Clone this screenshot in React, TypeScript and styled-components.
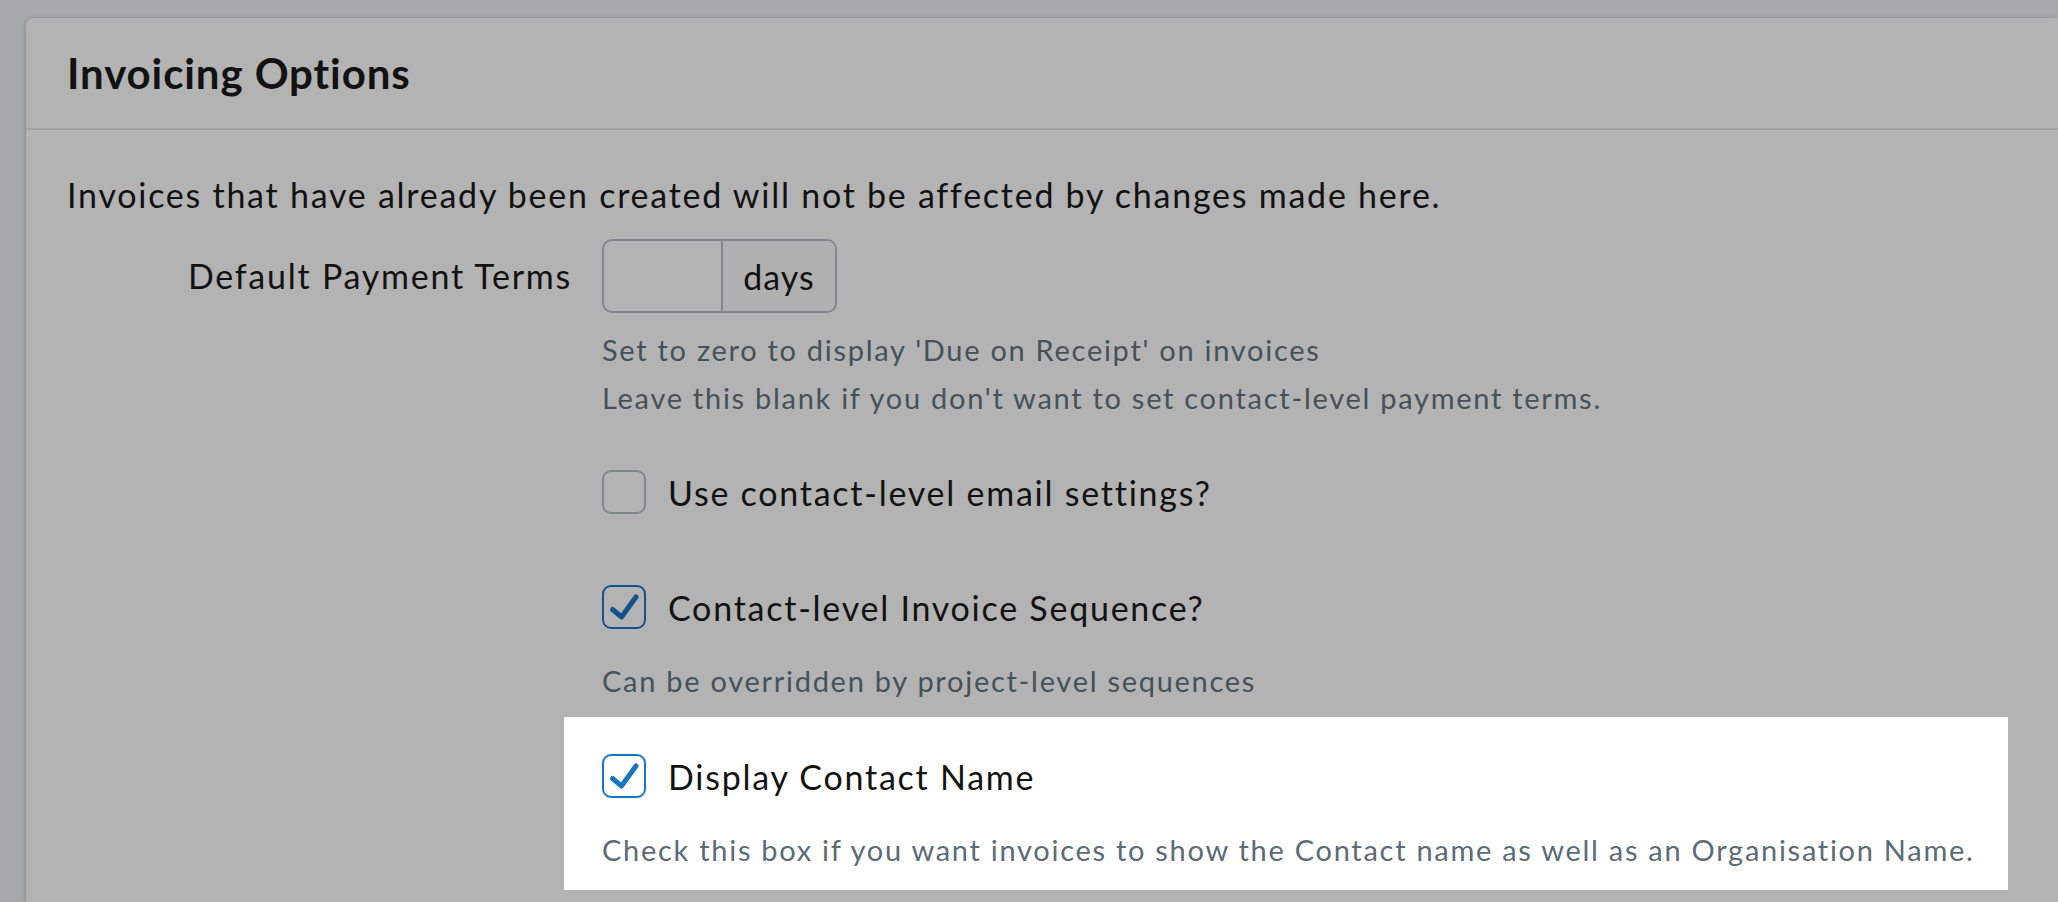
import React from "react";
import styled, { createGlobalStyle } from "styled-components";

const Global = createGlobalStyle`
  html, body { margin: 0; padding: 0; background: #a7aaad; }
  body { font-family: Lato, "Noto Sans", sans-serif; color: #121212; overflow: hidden; }
  * { box-sizing: border-box; }
`;

const Page = styled.div`
  padding: 18px 0 0 26px;
  height: 902px;
`;

const Card = styled.section`
  background: #b3b3b3;
  border-radius: 7px 0 0 0;
  box-shadow: -1px 0 4px rgba(0, 0, 0, 0.18);
  min-height: 900px;
`;

const Header = styled.header`
  height: 112px;
  display: flex;
  align-items: center;
  padding-left: 41px;
  border-bottom: 2px solid #a3a3a6;
`;

const Title = styled.h2`
  margin: 0;
  font-size: 42px;
  font-weight: 700;
  letter-spacing: 0.9px;
`;

const Body = styled.div`
  padding: 41px 0 0 41px;
  letter-spacing: 1.75px;
`;

const Intro = styled.p`
  margin: 0;
  font-size: 34px;
  line-height: 48px;
`;

const FormGrid = styled.div`
  display: grid;
  grid-template-columns: 505px 1fr;
  column-gap: 30px;
  margin-top: 20px;
`;

const Label = styled.div`
  grid-column: 1;
  text-align: right;
  font-size: 34px;
  height: 74px;
  line-height: 74px;
`;

const Control = styled.div`
  grid-column: 2;
`;

const InputGroup = styled.div`
  display: flex;
  width: 235px;
  height: 74px;
  border: 2px solid #80878b;
  border-radius: 10px;
  overflow: hidden;
`;

const Input = styled.input`
  width: 117px;
  border: none;
  background: transparent;
  outline: none;
  font: inherit;
  font-size: 34px;
`;

const Addon = styled.span`
  flex: 1;
  display: flex;
  align-items: center;
  justify-content: center;
  border-left: 2px solid #80878b;
  background: #b0b0b0;
  font-size: 34px;
  letter-spacing: 1px;
`;

const Help = styled.div<{ $light?: boolean }>`
  font-size: 29px;
  line-height: 48px;
  letter-spacing: 1.72px;
  color: ${(p) => (p.$light ? "#5c6b76" : "#44525b")};
  white-space: nowrap;
`;

const CheckRow = styled.label`
  display: flex;
  align-items: center;
  gap: 22px;
  height: 44px;
  font-size: 34px;
  cursor: pointer;
`;

const Box = styled.span<{ $color: string }>`
  width: 44px;
  height: 44px;
  flex: none;
  border: 2px solid ${(p) => p.$color};
  border-radius: 9px;
  display: flex;
  align-items: center;
  justify-content: center;
`;

const Highlight = styled.div`
  width: fit-content;
  margin-top: 12px;
  margin-left: -38px;
  padding: 37px 33px 16px 38px;
  background: #ffffff;
`;

const Spacer = styled.div<{ $h: number }>`
  height: ${(p) => p.$h}px;
`;

function Checkbox({ checked, color }: { checked: boolean; color: string }) {
  return (
    <Box $color={color}>
      {checked && (
        <svg width="44" height="44" viewBox="0 0 44 44" style={{ margin: -2 }}>
          <path
            d="M10.5 24.5 L19.5 32 L34 12"
            fill="none"
            stroke={color}
            strokeWidth="5"
            strokeLinecap="round"
            strokeLinejoin="round"
          />
        </svg>
      )}
    </Box>
  );
}

export default function App() {
  return (
    <>
      <Global />
      <Page>
        <Card>
          <Header>
            <Title>Invoicing Options</Title>
          </Header>
          <Body>
            <Intro>Invoices that have already been created will not be affected by changes made here.</Intro>
            <FormGrid>
              <Label>Default Payment Terms</Label>
              <Control>
                <InputGroup>
                  <Input type="text" aria-label="Default Payment Terms" />
                  <Addon>days</Addon>
                </InputGroup>
                <Spacer $h={13} />
                <Help>Set to zero to display 'Due on Receipt' on invoices</Help>
                <Help>Leave this blank if you don't want to set contact-level payment terms.</Help>
                <Spacer $h={48} />
                <CheckRow>
                  <Checkbox checked={false} color="#80878b" />
                  Use contact-level email settings?
                </CheckRow>
                <Spacer $h={71} />
                <CheckRow>
                  <Checkbox checked color="#12528c" />
                  Contact-level Invoice Sequence?
                </CheckRow>
                <Spacer $h={28} />
                <Help>Can be overridden by project-level sequences</Help>
                <Highlight>
                  <CheckRow>
                    <Checkbox checked color="#1a74c2" />
                    Display Contact Name
                  </CheckRow>
                  <Spacer $h={28} />
                  <Help $light>Check this box if you want invoices to show the Contact name as well as an Organisation Name.</Help>
                </Highlight>
              </Control>
            </FormGrid>
          </Body>
        </Card>
      </Page>
    </>
  );
}
